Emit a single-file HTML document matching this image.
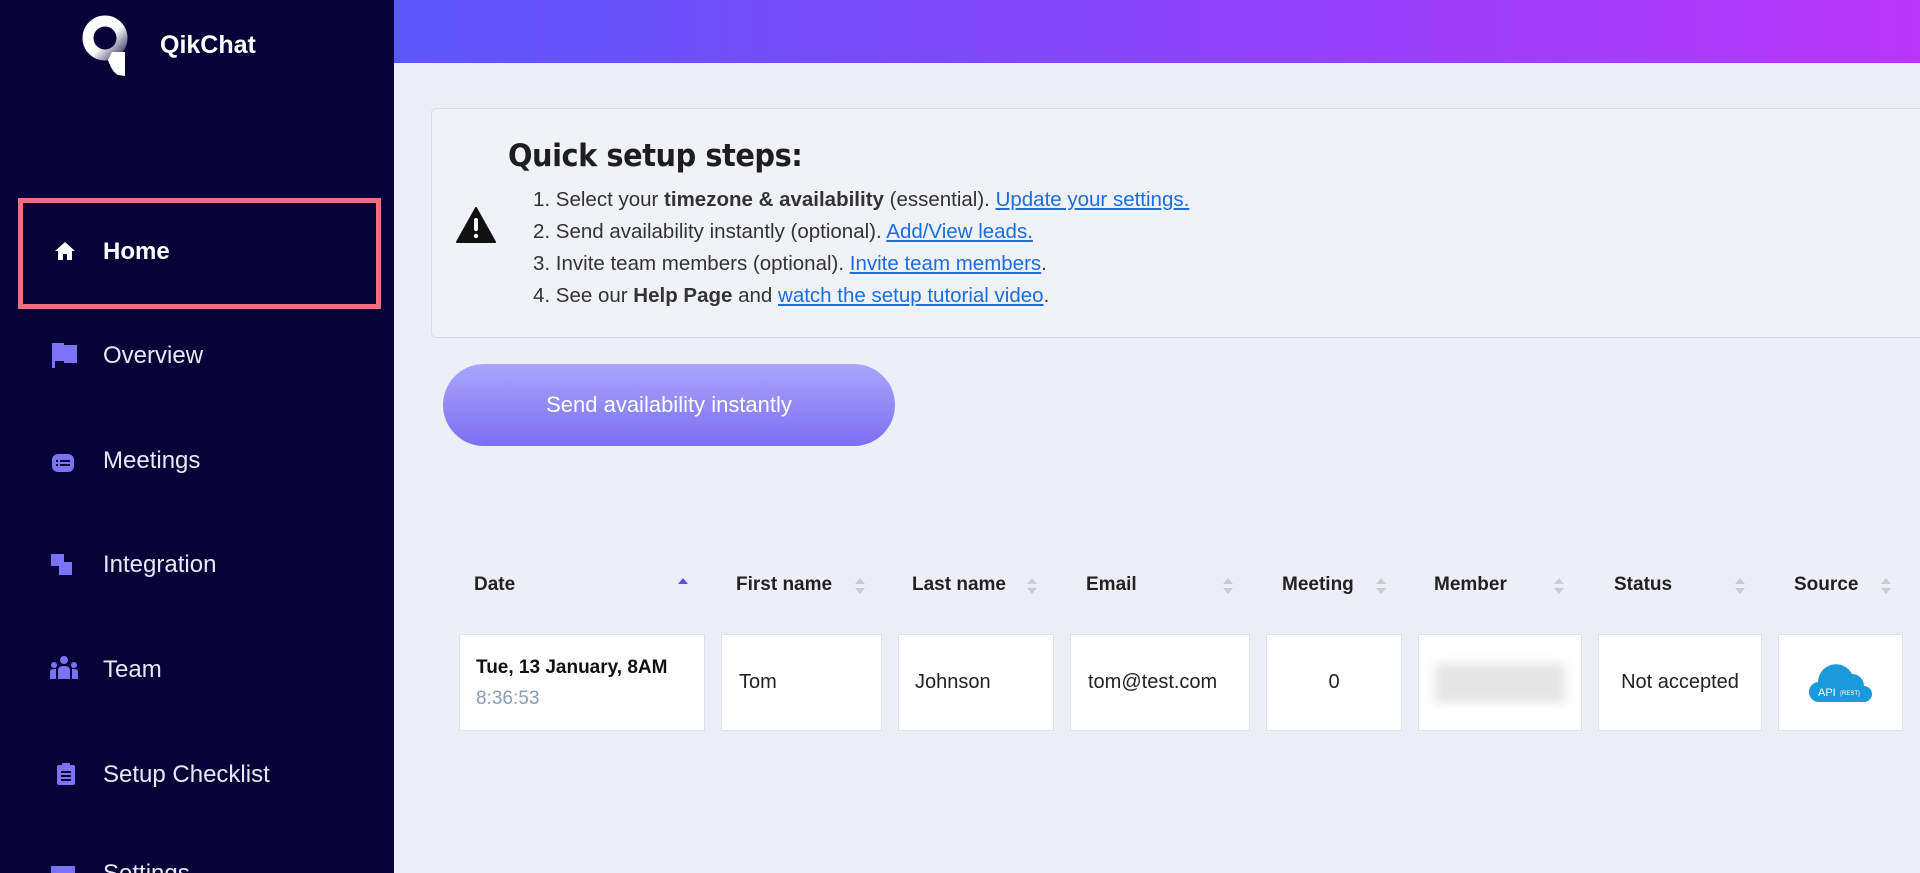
<!DOCTYPE html>
<html><head><meta charset="utf-8"><style>
*{margin:0;padding:0;box-sizing:border-box}
html,body{overflow:hidden}
body{width:1920px;height:873px;background:#eeeff6;font-family:"Liberation Sans",sans-serif;position:relative}
.sb{position:absolute;left:0;top:0;width:394px;height:873px;background:#070338}
.top{position:absolute;left:394px;top:0;right:0;height:63px;background:linear-gradient(90deg,#5c57fb,#8a45fb 50%,#b835fb)}
.logo{position:absolute;left:160px;top:31px;color:#fff;font-weight:bold;font-size:25px}
.hl{position:absolute;left:18px;top:198px;width:363px;height:111px;border:5px solid #e8717f}
.nav{position:absolute;left:103px;color:#e8e8f4;font-size:24px;line-height:28px}
.ic{position:absolute;left:50px}
.card{position:absolute;left:431px;top:108px;width:1500px;height:230px;background:#f1f2f7;border:1px solid #d9dae2;border-radius:5px}
.card h1{position:absolute;left:76px;top:29px;font-size:31px;color:#1e1e1e;font-family:"DejaVu Sans","Liberation Sans",sans-serif;font-weight:bold;letter-spacing:-0.5px;transform:scaleX(.93);transform-origin:left}
.li{position:absolute;left:101px;font-size:20.5px;color:#333;white-space:nowrap}
.li a{color:#1a6ee0;text-decoration:underline}
.btn{position:absolute;left:443px;top:364px;width:452px;height:82px;border-radius:41px;background:linear-gradient(180deg,#a9a6fb,#7a6ff2);color:#fff;font-size:22px;text-align:center;line-height:82px}
.th{position:absolute;top:574px;font-weight:bold;font-size:19px;color:#222}
.ar{position:absolute;top:576px;width:12px}
.cell{position:absolute;top:634px;height:97px;background:#fff;border:1px solid #dfe0e8;font-size:20px;color:#222;display:flex;align-items:center}
</style></head><body>
<div class="sb"></div>
<div class="top"></div>
<svg style="position:absolute;left:80px;top:12px" width="52" height="66" viewBox="0 0 52 66"><defs><linearGradient id="g" x1="0" y1="0" x2="1" y2="1"><stop offset="0" stop-color="#fff"/><stop offset=".55" stop-color="#fff"/><stop offset="1" stop-color="#4a4570"/></linearGradient></defs><circle cx="25" cy="26" r="17" fill="none" stroke="url(#g)" stroke-width="11"/><path d="M32 40L45 40 45 64 38 63Q32 60 28 48Z" fill="#fff"/></svg>
<div class="logo">QikChat</div>
<div class="hl"></div>
<svg class="ic" style="top:241px;left:54px" width="22" height="20" viewBox="0 0 22 20"><path d="M11 1L1 10H4V19H9V13H13V19H18V10H21Z" fill="#fff"/></svg>
<div class="nav" style="top:238px;color:#fff;font-weight:bold">Home</div>
<svg class="ic" style="top:341px" width="28" height="28" viewBox="0 0 28 28"><path d="M2 2H14V4H27V22H14V20H5V27H2Z" fill="#7b72f7"/></svg>
<div class="nav" style="top:342px">Overview</div>
<svg class="ic" style="top:452px" width="26" height="22" viewBox="0 0 26 22"><rect x="2" y="2" width="22" height="18" rx="6" fill="#7b72f7"/><rect x="6" y="8" width="2" height="2" fill="#070338"/><rect x="10" y="8" width="10" height="2" fill="#070338"/><rect x="6" y="12" width="2" height="2" fill="#070338"/><rect x="10" y="12" width="10" height="2" fill="#070338"/></svg>
<div class="nav" style="top:447px">Meetings</div>
<svg class="ic" style="top:553px" width="24" height="24" viewBox="0 0 24 24"><rect x="1" y="1" width="13" height="12" fill="#7b72f7"/><rect x="9" y="9" width="13" height="13" fill="#7b72f7"/></svg>
<div class="nav" style="top:551px">Integration</div>
<svg class="ic" style="top:655px" width="28" height="26" viewBox="0 0 28 26"><circle cx="14" cy="5" r="4" fill="#7b72f7"/><circle cx="4" cy="10" r="3" fill="#7b72f7"/><circle cx="24" cy="10" r="3" fill="#7b72f7"/><path d="M8 24V15Q8 11 14 11Q20 11 20 15V24ZM0 24V17Q0 14 4 14H6V24ZM22 24V14H24Q28 14 28 17V24Z" fill="#7b72f7"/></svg>
<div class="nav" style="top:656px">Team</div>
<svg class="ic" style="top:762px;left:56px" width="20" height="24" viewBox="0 0 20 24"><rect x="1" y="3" width="18" height="20" rx="2" fill="#7b72f7"/><rect x="6" y="1" width="8" height="5" rx="1" fill="#7b72f7"/><rect x="5" y="9" width="10" height="2" fill="#070338"/><rect x="5" y="13" width="10" height="2" fill="#070338"/><rect x="5" y="17" width="10" height="2" fill="#070338"/></svg>
<div class="nav" style="top:761px">Setup Checklist</div>
<svg class="ic" style="top:864px" width="26" height="9"><rect x="1" y="2" width="24" height="7" fill="#7b72f7"/></svg>

<div class="card">
<svg style="position:absolute;left:24px;top:98px" width="40" height="36" viewBox="0 0 40 36"><path d="M20 1L39 35H1Z" fill="#111" stroke="#111" stroke-linejoin="round" stroke-width="2"/><rect x="18" y="11" width="4" height="13" rx="2" fill="#fff"/><circle cx="20" cy="29" r="2.2" fill="#fff"/></svg>
<h1>Quick setup steps:</h1>
<div class="li" style="top:79px">1. Select your <b>timezone &amp; availability</b> (essential). <a>Update your settings.</a></div>
<div class="li" style="top:111px">2. Send availability instantly (optional). <a>Add/View leads.</a></div>
<div class="li" style="top:143px">3. Invite team members (optional). <a>Invite team members</a>.</div>
<div class="li" style="top:175px">4. See our <b>Help Page</b> and <a>watch the setup tutorial video</a>.</div>
</div>
<div class="btn">Send availability instantly</div>

<div class="th" style="left:474px">Date</div>
<div class="th" style="left:736px">First name</div>
<div class="th" style="left:912px">Last name</div>
<div class="th" style="left:1086px">Email</div>
<div class="th" style="left:1282px">Meeting</div>
<div class="th" style="left:1434px">Member</div>
<div class="th" style="left:1614px">Status</div>
<div class="th" style="left:1794px">Source</div>
<svg class="ar" style="left:677px" height="20" viewBox="0 0 12 20"><path d="M1 8L6 2 11 8Z" fill="#5b4ff5"/></svg>
<svg class="ar" style="left:854px" height="20" viewBox="0 0 12 20"><path d="M1 8L6 2 11 8ZM1 12L6 18 11 12Z" fill="#c9ccd8"/></svg>
<svg class="ar" style="left:1026px" height="20" viewBox="0 0 12 20"><path d="M1 8L6 2 11 8ZM1 12L6 18 11 12Z" fill="#c9ccd8"/></svg>
<svg class="ar" style="left:1222px" height="20" viewBox="0 0 12 20"><path d="M1 8L6 2 11 8ZM1 12L6 18 11 12Z" fill="#c9ccd8"/></svg>
<svg class="ar" style="left:1375px" height="20" viewBox="0 0 12 20"><path d="M1 8L6 2 11 8ZM1 12L6 18 11 12Z" fill="#c9ccd8"/></svg>
<svg class="ar" style="left:1553px" height="20" viewBox="0 0 12 20"><path d="M1 8L6 2 11 8ZM1 12L6 18 11 12Z" fill="#c9ccd8"/></svg>
<svg class="ar" style="left:1734px" height="20" viewBox="0 0 12 20"><path d="M1 8L6 2 11 8ZM1 12L6 18 11 12Z" fill="#c9ccd8"/></svg>
<svg class="ar" style="left:1880px" height="20" viewBox="0 0 12 20"><path d="M1 8L6 2 11 8ZM1 12L6 18 11 12Z" fill="#c9ccd8"/></svg>

<div class="cell" style="left:459px;width:246px;display:block;padding:22px 0 0 16px"><div style="font-weight:bold;font-size:19px;color:#111">Tue, 13 January, 8AM</div><div style="color:#8a9bb8;font-size:19px;margin-top:9px">8:36:53</div></div>
<div class="cell" style="left:721px;width:161px;padding-left:17px">Tom</div>
<div class="cell" style="left:898px;width:156px;padding-left:16px">Johnson</div>
<div class="cell" style="left:1070px;width:180px;padding-left:17px">tom@test.com</div>
<div class="cell" style="left:1266px;width:136px;justify-content:center">0</div>
<div class="cell" style="left:1418px;width:164px;justify-content:center"><div style="width:130px;height:40px;background:#e6e6e6;filter:blur(5px)"></div></div>
<div class="cell" style="left:1598px;width:164px;justify-content:center">Not accepted</div>
<div class="cell" style="left:1778px;width:125px;justify-content:center"><svg width="66" height="46" viewBox="0 0 66 46"><path d="M12 42A10 10 0 0 1 10 22 18 18 0 0 1 44 14 12 12 0 0 1 56 26 8 8 0 0 1 56 42Z" fill="#1a9ad9"/><text x="10" y="36" font-size="11" fill="#fff" font-family="Liberation Sans">API</text><text x="32" y="35" font-size="6" fill="#fff" font-family="Liberation Sans">{REST}</text></svg></div>
<div class="nav" style="top:860px">Settings</div>
</body></html>
